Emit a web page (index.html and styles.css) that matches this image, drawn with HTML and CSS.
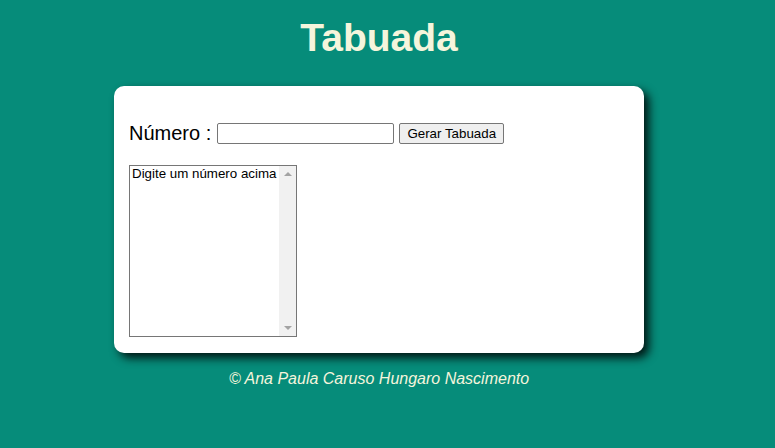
FILE: index.html
```html
<!DOCTYPE html>
<html lang="pt-BR">
<head>
<meta charset="utf-8">
<title>Tabuada</title>
<link rel="stylesheet" href="styles.css">
</head>
<body>
<div class="page">
  <header class="header">
    <h1 class="title">Tabuada</h1>
  </header>
  <section class="card">
    <div class="row">
      <label class="label" for="txtn">Número :</label>
      <input class="field" type="number" id="txtn">
      <input class="btn" type="button" value="Gerar Tabuada">
    </div>
    <div class="listbox">
      <select class="list" id="seltab" size="10">
        <option>Digite um número acima</option>
      </select>
      <div class="scrollbar">
        <span class="arrow arrow-up"></span>
        <span class="arrow arrow-down"></span>
      </div>
    </div>
  </section>
  <footer class="footer">
    <p class="credit">&copy; Ana Paula Caruso Hungaro Nascimento</p>
  </footer>
</div>
</body>
</html>
```

FILE: styles.css
```css
html, body {
  margin: 0;
  padding: 0;
}
body {
  background: #068c7a;
  font-family: "Liberation Sans", Arial, sans-serif;
  height: 448px;
  overflow: hidden;
}
.page {
  width: 758px;
  display: flex;
  flex-direction: column;
  align-items: center;
}
.header {
  padding-top: 15px;
  height: 86px;
  box-sizing: border-box;
}
.title {
  margin: 0;
  color: #f5f5dc;
  font-size: 39px;
  font-weight: bold;
  line-height: 45px;
}
.card {
  width: 530px;
  box-sizing: border-box;
  background: #fff;
  border-radius: 10px;
  box-shadow: 5px 5px 10px rgba(0, 0, 0, 0.85);
  padding: 35px 15px 16px;
}
.row {
  display: flex;
  align-items: center;
  height: 25px;
}
.label {
  font-size: 20px;
  color: #000;
  margin-right: 6px;
}
.field {
  width: 177px;
  height: 21px;
  box-sizing: border-box;
  border: 1px solid #767676;
  border-radius: 2px;
  margin: 0 5px 0 0;
  padding: 1px 2px;
  font-family: "Liberation Sans", Arial, sans-serif;
  -moz-appearance: textfield;
}
.field::-webkit-outer-spin-button,
.field::-webkit-inner-spin-button {
  -webkit-appearance: none;
  margin: 0;
}
.btn {
  height: 21px;
  width: 105px;
  box-sizing: border-box;
  margin: 0;
  padding: 1px 6px;
  font-family: "Liberation Sans", Arial, sans-serif;
  font-size: 13.33px;
  color: #000;
  background: #efefef;
  border: 1px solid #767676;
  border-radius: 2px;
}
.listbox {
  margin-top: 19px;
  width: 168px;
  height: 172px;
  box-sizing: border-box;
  border: 1px solid #767676;
  display: flex;
  background: #fff;
}
.list {
  flex: 1;
  min-width: 0;
  height: 100%;
  border: none;
  outline: none;
  margin: 0;
  padding: 0;
  font-family: "Liberation Sans", Arial, sans-serif;
  font-size: 13.33px;
  color: #000;
  overflow: hidden;
  background: transparent;
}
.list option {
  padding: 0 2px;
}
.scrollbar {
  width: 17px;
  background: #f1f1f1;
  display: flex;
  flex-direction: column;
  justify-content: space-between;
  align-items: center;
  padding: 6px 0;
  box-sizing: border-box;
}
.arrow {
  width: 0;
  height: 0;
  border-left: 4px solid transparent;
  border-right: 4px solid transparent;
}
.arrow-up {
  border-bottom: 4px solid #a3a3a3;
}
.arrow-down {
  border-top: 4px solid #a3a3a3;
}
.footer {
  margin-top: 17px;
}
.credit {
  margin: 0;
  color: #f5f5dc;
  font-style: italic;
  font-size: 16px;
}
```
